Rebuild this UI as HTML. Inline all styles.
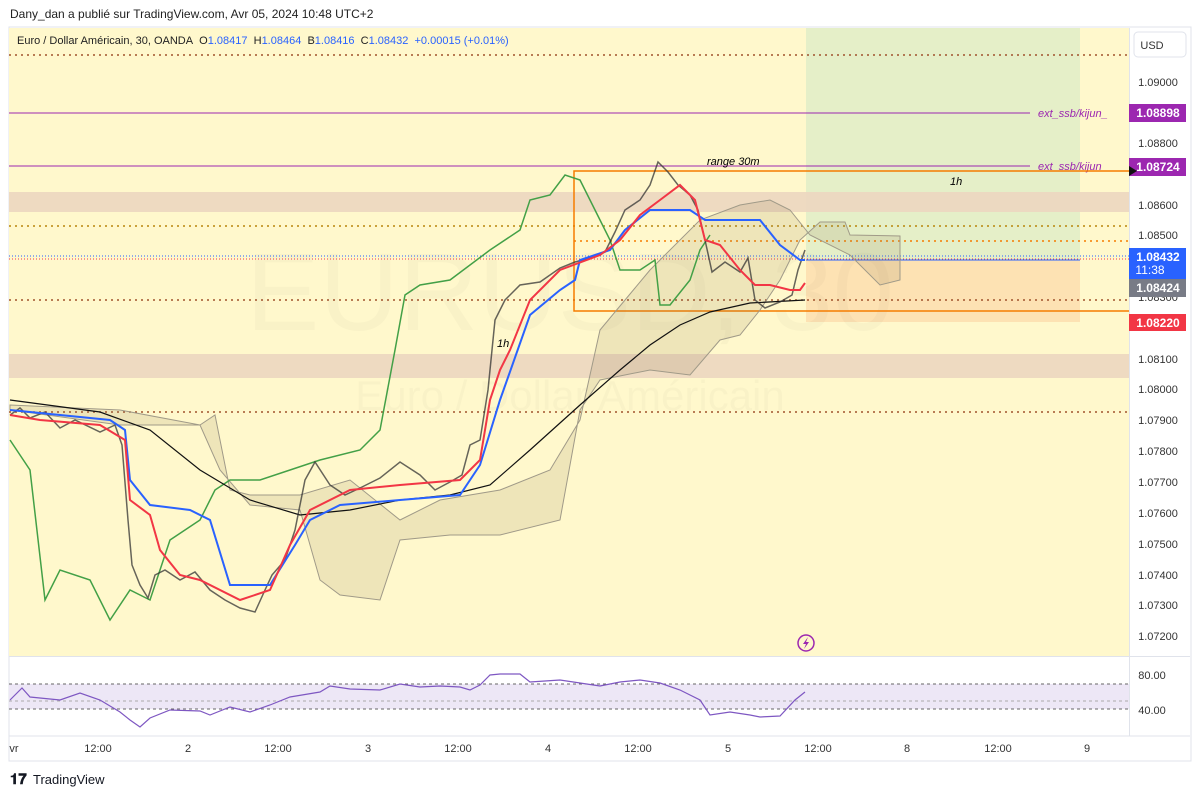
<!DOCTYPE html>
<html><head><meta charset="utf-8"><style>
body{margin:0;width:1201px;height:797px;background:#fff;font-family:"Liberation Sans",sans-serif;overflow:hidden;position:relative}
.t{position:absolute;white-space:nowrap}
</style></head><body>
<div class="t" style="left:10px;top:7px;font-size:12px;color:#222">Dany_dan a publié sur TradingView.com, Avr 05, 2024 10:48 UTC+2</div>
<svg width="1201" height="797" style="position:absolute;left:0;top:0" font-family="Liberation Sans, sans-serif">
<rect x="9" y="27" width="1182" height="734" fill="none" stroke="#e0e3eb"/>
<rect x="9" y="28" width="1120" height="628" fill="#fff8cc"/>
<rect x="806" y="28" width="274" height="232" fill="#e5efc8"/>
<rect x="806" y="260" width="274" height="62" fill="#fde2b3"/>
<rect x="9" y="192" width="1120" height="20" fill="#ecd6c0" opacity=".9"/>
<rect x="9" y="354" width="1120" height="24" fill="#ecd6c0" opacity=".9"/>
<text x="570" y="330" font-size="110" fill="#000" opacity=".02" text-anchor="middle">EURUSD, 30</text>
<text x="570" y="410" font-size="42" fill="#000" opacity=".02" text-anchor="middle">Euro / Dollar Américain</text>
<g stroke-dasharray="2,4" stroke-width="1.5">
<line x1="9" y1="55" x2="1129" y2="55" stroke="#a0522d"/>
<line x1="9" y1="226" x2="1129" y2="226" stroke="#b8860b"/>
<line x1="574" y1="241" x2="1129" y2="241" stroke="#f57c00"/>
<line x1="9" y1="300" x2="1129" y2="300" stroke="#a0522d"/>
<line x1="9" y1="412" x2="1129" y2="412" stroke="#a0522d"/>
<line x1="9" y1="256" x2="1129" y2="256" stroke="#2962ff" stroke-width="1" stroke-dasharray="1,2"/>
<line x1="9" y1="259" x2="1129" y2="259" stroke="#f23645" stroke-width="1" stroke-dasharray="1,2"/>
</g>
<line x1="9" y1="113" x2="1030" y2="113" stroke="#9c27b0"/>
<line x1="9" y1="166" x2="1030" y2="166" stroke="#9c27b0"/>
<text x="1038" y="117" font-size="11" font-style="italic" fill="#9c27b0">ext_ssb/kijun_</text>
<text x="1038" y="170" font-size="11" font-style="italic" fill="#9c27b0">ext_ssb/kijun_</text>
<polyline points="1129,171 574,171 574,311 1129,311" fill="none" stroke="#f57c00" stroke-width="1.5"/>
<line x1="806" y1="260" x2="1080" y2="260" stroke="#2962ff"/>
<text x="707" y="165" font-size="11" font-style="italic">range 30m</text>
<text x="950" y="185" font-size="11" font-style="italic">1h</text>
<text x="497" y="347" font-size="11" font-style="italic">1h</text>
<polygon points="10,405 120,410 200,425 215,415 230,490 250,495 300,495 350,480 400,520 440,500 500,490 550,470 580,420 600,330 650,270 700,220 740,205 770,200 790,210 810,235 850,255 880,285 900,280 900,236 850,235 845,222 820,222 800,240 780,280 760,310 740,335 720,340 690,375 650,370 600,380 580,410 560,520 500,535 450,535 400,540 380,600 340,595 320,580 300,510 250,505 220,470 200,425 120,425 10,410" fill="#8a7a50" fill-opacity=".15" stroke="#a09a88" stroke-width="1"/>
<polyline points="10,440 30,470 45,600 60,570 90,580 110,620 130,590 150,600 170,540 200,520 215,490 230,480 260,480 290,470 320,460 360,450 380,430 395,350 405,295 420,285 450,280 490,250 520,230 530,200 550,195 565,175 580,180 590,200 600,220 610,240 620,270 640,270 655,260 660,305 670,305 690,280 700,250 710,235" fill="none" stroke="#43a047" stroke-width="1.5"/>
<polyline points="10,400 100,412 150,430 200,470 250,500 300,515 350,510 400,500 450,495 490,485 530,450 580,405 620,370 650,345 680,325 710,312 750,303 805,300" fill="none" stroke="#111" stroke-width="1.2"/>
<polyline points="10,415 20,408 30,418 45,412 60,428 75,420 100,432 115,425 122,445 128,520 132,565 140,585 148,598 155,575 165,570 180,580 195,572 210,590 225,600 240,608 255,612 265,590 272,575 285,560 295,530 305,480 315,462 330,485 345,495 360,488 380,478 400,462 420,475 435,490 450,482 462,475 470,445 480,440 488,390 495,320 505,300 520,285 540,282 560,268 575,262 590,258 605,252 615,232 625,210 640,200 650,185 658,162 668,172 678,185 690,195 698,210 705,240 712,272 725,262 740,272 748,258 755,300 765,308 780,302 792,295 798,270 805,250" fill="none" stroke="#333" stroke-width="1.5" opacity=".75"/>
<polyline points="10,410 110,420 125,430 130,480 150,505 190,510 210,520 230,585 270,585 295,545 310,520 340,505 400,500 460,495 480,465 500,400 530,315 560,290 575,280 580,260 610,250 625,230 650,210 690,210 705,220 760,220 780,245 800,260 805,260" fill="none" stroke="#2962ff" stroke-width="2"/>
<polyline points="10,415 40,420 100,425 125,440 130,500 150,515 160,550 180,575 200,580 240,600 270,590 290,545 310,510 350,490 400,485 460,480 480,460 490,400 500,370 510,350 530,300 560,270 600,255 620,240 640,215 660,200 680,185 695,200 705,240 720,245 740,270 755,285 770,285 790,290 800,290 805,283" fill="none" stroke="#f23645" stroke-width="2"/>
<circle cx="806" cy="643" r="8" fill="none" stroke="#9c27b0" stroke-width="1.5"/>
<path d="M808,637 L803,644 L806,644 L804,649 L809,642 L806,642 Z" fill="#9c27b0"/>
<line x1="9" y1="656.5" x2="1190" y2="656.5" stroke="#e0e3eb"/>
<rect x="9" y="684" width="1120" height="25" fill="#ede7f6"/>
<g stroke="#666" stroke-dasharray="3,3"><line x1="9" y1="684" x2="1129" y2="684"/><line x1="9" y1="709" x2="1129" y2="709"/><line x1="9" y1="701" x2="1129" y2="701" stroke="#aaa"/></g>
<polyline points="10,700 22,688 30,697 60,700 80,693 100,700 120,712 130,720 140,727 150,718 170,710 200,711 210,715 230,707 250,712 270,705 290,697 320,692 330,686 350,689 380,690 400,684 420,687 440,686 460,687 470,690 480,685 490,675 500,674 520,674 530,682 560,680 580,683 600,686 620,682 640,680 660,683 680,690 700,700 710,715 730,712 750,715 760,717 780,716 795,700 805,692" fill="none" stroke="#7e57c2" stroke-width="1.2"/>
<line x1="9" y1="736" x2="1190" y2="736" stroke="#e0e3eb"/>
<line x1="1129.5" y1="28" x2="1129.5" y2="736" stroke="#e0e3eb"/>
<g font-size="11" fill="#333" text-anchor="middle">
<text x="14" y="752">vr</text><text x="98" y="752">12:00</text><text x="188" y="752">2</text><text x="278" y="752">12:00</text><text x="368" y="752">3</text><text x="458" y="752">12:00</text><text x="548" y="752">4</text><text x="638" y="752">12:00</text><text x="728" y="752">5</text><text x="818" y="752">12:00</text><text x="907" y="752">8</text><text x="998" y="752">12:00</text><text x="1087" y="752">9</text>
</g>
<g font-size="11" fill="#333" text-anchor="middle">
<text x="1158" y="86">1.09000</text><text x="1158" y="147">1.08800</text><text x="1158" y="209">1.08600</text><text x="1158" y="239">1.08500</text><text x="1158" y="301">1.08300</text><text x="1158" y="363">1.08100</text><text x="1158" y="393">1.08000</text><text x="1158" y="424">1.07900</text><text x="1158" y="455">1.07800</text><text x="1158" y="486">1.07700</text><text x="1158" y="517">1.07600</text><text x="1158" y="548">1.07500</text><text x="1158" y="579">1.07400</text><text x="1158" y="609">1.07300</text><text x="1158" y="640">1.07200</text>
<text x="1152" y="679">80.00</text><text x="1152" y="714">40.00</text>
</g>
<rect x="1134" y="32" width="52" height="25" rx="4" fill="#fff" stroke="#e0e3eb"/>
<text x="1152" y="49" font-size="11" fill="#333" text-anchor="middle">USD</text>
<g font-size="12" font-weight="bold" fill="#fff" text-anchor="middle">
<rect x="1129" y="104" width="57" height="18" fill="#9c27b0"/><text x="1158" y="117">1.08898</text>
<rect x="1129" y="158" width="57" height="18" fill="#9c27b0"/><text x="1158" y="171">1.08724</text>
<rect x="1129" y="248" width="57" height="32" fill="#2962ff"/><text x="1158" y="261">1.08432</text><text x="1150" y="274" font-weight="normal">11:38</text>
<rect x="1129" y="279" width="57" height="18" fill="#787b86"/><text x="1158" y="292">1.08424</text>
<rect x="1129" y="314" width="57" height="17" fill="#f23645"/><text x="1158" y="327">1.08220</text>
</g>
<polygon points="1129,166 1137,171 1129,176" fill="#111"/>
<text x="10" y="784" font-size="15" font-weight="bold" fill="#131722">𝟏𝟕</text>
<text x="33" y="784" font-size="13" fill="#131722">TradingView</text>
</svg>
<div class="t" style="left:17px;top:35px;font-size:11px;color:#222">Euro / Dollar Américain, 30, OANDA&nbsp; O<span style="color:#2962ff">1.08417</span>&nbsp; H<span style="color:#2962ff">1.08464</span>&nbsp; B<span style="color:#2962ff">1.08416</span>&nbsp; C<span style="color:#2962ff">1.08432</span>&nbsp; <span style="color:#2962ff">+0.00015 (+0.01%)</span></div>
</body></html>
